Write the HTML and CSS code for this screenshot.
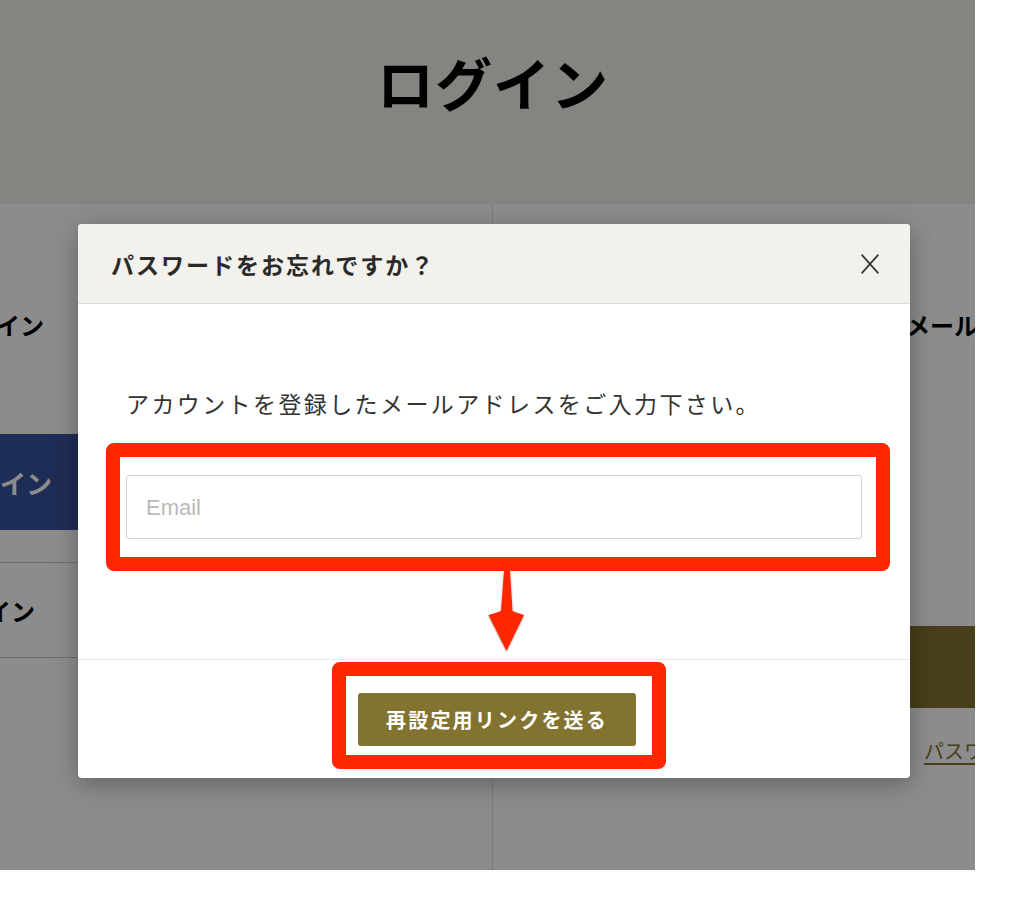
FILE: index.html
```html
<!DOCTYPE html>
<html lang="ja">
<head>
    <meta charset="UTF-8">
    <meta name="viewport" content="width=device-width, initial-scale=1.0">
    <title>ログイン</title>
    <link rel="stylesheet" href="styles.css">
</head>
<body>
    <div class="page">
        <header class="page-header">
            <h1>ログイン</h1>
        </header>

        <div class="columns">
            <!-- 会員ログイン -->
            <div class="col col-left">
                <h2 class="col-title pr-400">メールアドレスでログイン</h2>
                <a class="btn-navy pr-392" href="#">Facebookでログイン</a>
                <div class="sns-row pr-409">Googleでログイン</div>
            </div>

            <!-- 新規登録 -->
            <div class="col col-right">
                <h2 class="col-title">はじめてご利用のお客様・新規メールアドレスで会員登録</h2>
                <a class="btn-olive" href="#">ログイン</a>
                <p class="forgot"><a href="#">パスワードをお忘れの方</a></p>
            </div>
        </div>

        <!-- パスワード再設定モーダル -->
        <div class="overlay">
            <div class="modal">
                <div class="modal-header">
                    <h3>パスワードをお忘れですか？</h3>
                    <button class="close" type="button" aria-label="閉じる">
                        <svg width="18" height="20" viewBox="0 0 18 20">
                            <path d="M0.6 0.6L17.4 19.4M17.4 0.6L0.6 19.4" stroke="#333" stroke-width="1.8" fill="none"/>
                        </svg>
                    </button>
                </div>
                <div class="modal-body">
                    <p>アカウントを登録したメールアドレスをご入力下さい。</p>
                    <div class="field">
                        <input type="email" placeholder="Email">
                        <span class="mark mark-input"></span>
                    </div>
                    <svg class="arrow" width="40" height="84" viewBox="0 0 40 84">
                        <path d="M17 2 L23 2 L25.5 42 Q30 44 37 46 L19.5 82 L1.5 46 Q9 44 14 42 Z" fill="#ff2600"/>
                    </svg>
                </div>
                <div class="modal-footer">
                    <span class="send-wrap">
                        <button class="btn-send" type="button">再設定用リンクを送る</button>
                        <span class="mark mark-send"></span>
                    </span>
                </div>
            </div>
        </div>
    </div>
</body>
</html>
```

FILE: styles.css
```css
body {
    margin: 0;
    background: #ffffff;
    font-family: "Noto Sans CJK JP", "Noto Sans", sans-serif;
    color: #333;
}

.page {
    position: relative;
    width: 975px;
    height: 870px;
    overflow: hidden;
    background: #ffffff;
}

/* ヘッダー */
.page-header {
    height: 204px;
    padding-left: 11px;
    background: #f2f1ec;
    text-align: center;
    box-sizing: border-box;
}

.page-header h1 {
    margin: 0;
    padding-top: 53px;
    font-size: 57px;
    line-height: 1;
    letter-spacing: 1px;
    font-weight: 700;
    color: #000;
}

/* カラム */
.columns {
    display: grid;
    grid-template-columns: 493px 1fr;
    height: 666px;
}

.col {
    white-space: nowrap;
    overflow: hidden;
}

.col-left {
    border-right: 1px solid #dedede;
    padding-right: 48px;
}

/* 左カラムは画面の左端で切れている */
.col-left > * {
    display: flex;
    justify-content: flex-end;
}

.col-right {
    padding-left: 77px;
}

.col-title {
    margin: 104px 0 0;
    font-size: 24px;
    line-height: 34px;
    font-weight: 700;
    color: #000;
}

.pr-400 { padding-right: 400px; }
.pr-392 { padding-right: 392px; }
.pr-409 { padding-right: 409px; }

.btn-navy {
    margin-top: 92px;
    height: 96px;
    align-items: center;
    background: #38529b;
    color: #ffffff;
    font-size: 26px;
    font-weight: 700;
    text-decoration: none;
}

.sns-row {
    margin-top: 32px;
    height: 94px;
    align-items: center;
    border-top: 1px solid #c8c8c8;
    border-bottom: 1px solid #c8c8c8;
    font-size: 24px;
    font-weight: 700;
    color: #000;
}

.btn-olive {
    display: block;
    margin-top: 284px;
    height: 82px;
    background: #83712f;
    color: #ffffff;
    text-decoration: none;
    text-indent: -9999px;
}

.forgot {
    margin: 28px 0 0;
    padding-left: 354px;
    line-height: 30px;
    font-size: 20px;
}

.forgot a {
    color: #83712f;
    text-decoration: underline;
    text-underline-offset: 4px;
}

/* モーダル */
.overlay {
    position: absolute;
    inset: 0;
    background: rgba(0, 0, 0, 0.45);
}

.modal {
    width: 832px;
    margin: 224px 0 0 78px;
    background: #ffffff;
    border-radius: 4px;
    box-shadow: 0 6px 24px rgba(0, 0, 0, 0.3);
}

.modal-header {
    display: flex;
    align-items: center;
    justify-content: space-between;
    height: 80px;
    padding: 0 31px 0 33px;
    background: #f2f1ec;
    border-bottom: 1px solid #dcdcdc;
    border-radius: 4px 4px 0 0;
    box-sizing: border-box;
}

.modal-header h3 {
    margin: 0;
    font-size: 23px;
    font-weight: 700;
    letter-spacing: 2px;
    color: #2a2a2a;
}

.close {
    display: flex;
    padding: 0;
    border: none;
    background: none;
    cursor: pointer;
}

.modal-body {
    position: relative;
    height: 355px;
    padding: 82px 48px 0;
    box-sizing: border-box;
}

.modal-body p {
    margin: 0;
    font-size: 23px;
    line-height: 34px;
    letter-spacing: 2.4px;
    color: #333;
}

.field {
    position: relative;
    margin-top: 55px;
}

.field input {
    display: block;
    width: 100%;
    height: 64px;
    padding: 2px 19px 0;
    border: 1px solid #d2d2d2;
    border-radius: 3px;
    font-family: "Liberation Sans", sans-serif;
    font-size: 22px;
    color: #333;
    box-sizing: border-box;
}

.field input::placeholder {
    color: #b9b9b9;
}

/* 注釈の赤枠と矢印 */
.mark {
    position: absolute;
    border: 14px solid #ff2600;
    border-radius: 8px;
    pointer-events: none;
}

.mark-input {
    top: -32px;
    bottom: -32px;
    left: -20px;
    right: -28px;
}

.mark-send {
    top: -31px;
    bottom: -23px;
    left: -26px;
    right: -30px;
}

.arrow {
    position: absolute;
    left: 409px;
    top: 265px;
    filter: drop-shadow(0 1px 1px rgba(0, 0, 0, 0.35));
}

.modal-footer {
    padding: 33px 0 32px 6px;
    border-top: 1px solid #e8e8e8;
    text-align: center;
}

.send-wrap {
    position: relative;
    display: inline-block;
    vertical-align: top;
}

.btn-send {
    display: block;
    width: 278px;
    height: 53px;
    padding: 0;
    border: none;
    border-radius: 3px;
    background: #837330;
    color: #ffffff;
    font-family: "Noto Sans CJK JP", sans-serif;
    font-size: 20px;
    font-weight: 700;
    letter-spacing: 2.2px;
    cursor: pointer;
}
```
